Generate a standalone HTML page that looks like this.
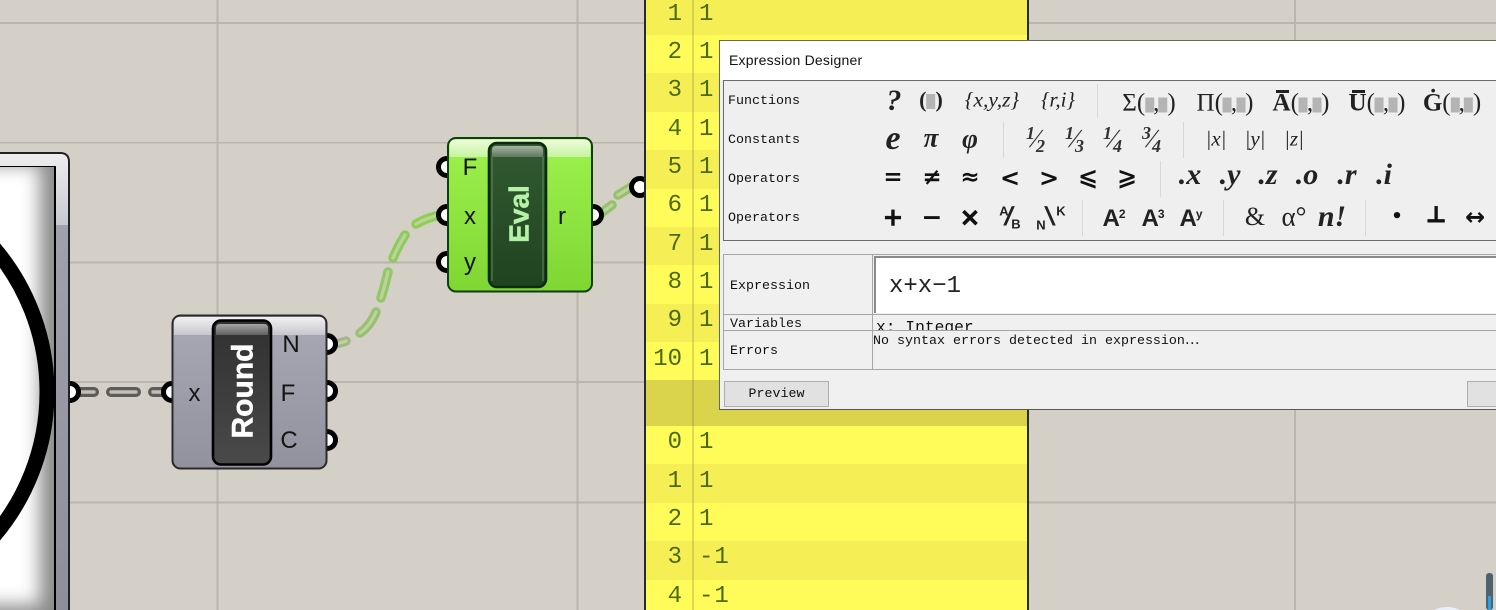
<!DOCTYPE html>
<html>
<head>
<meta charset="utf-8">
<style>
html,body{margin:0;padding:0;width:1496px;height:610px;overflow:hidden;background:#d4d0c8}
#stage{position:relative;width:1496px;height:610px;overflow:hidden}
svg.c{position:absolute;left:0;top:0}
.row{position:absolute;left:646px;width:381px}
.n,.v{position:absolute;font-family:"Liberation Mono",monospace;font-size:24px;line-height:24px;color:#4c6a12;white-space:pre}
.n{width:37px;left:645px;text-align:right}
.v{left:699px}
#dlg{position:absolute;left:719px;top:40px;width:780px;height:370px;box-sizing:border-box;background:#f0f0f0;border-top:1px solid #6a6a55;border-left:1px solid #666;border-bottom:1px solid #5a5a50}
#title{position:absolute;left:0;top:0;right:0;height:39px;background:#fff;font:14px/38px "Liberation Sans",sans-serif;color:#111;padding-left:9px;letter-spacing:.22px}
.m{position:absolute;font:13.33px/14px "Liberation Mono",monospace;color:#111;white-space:pre}
.i{position:absolute;transform:translate(-50%,-50%);white-space:nowrap;line-height:1;color:#222}
.s{font-family:"Liberation Serif",serif}
.b{font-weight:bold}
.it{font-style:italic}
.r{font-weight:normal}
.d{font-family:"DejaVu Sans",sans-serif;font-weight:bold;color:#111}
.a{font-family:"Liberation Sans",sans-serif;font-weight:bold;color:#222}
.sep{position:absolute;width:1px;background:#d8d8d8}
.h{display:inline-block;width:9px;height:15px;background:#b4b4b4;vertical-align:-2px}
.cm{margin:0 -1px}
.l{position:absolute;background:#a6a6a6}
sup.z{font-size:.5em;vertical-align:.7em;line-height:0;margin-left:-1px}
.bar{position:absolute;height:2.5px;background:#222}
.f{position:absolute;font:italic bold 18px/1 "Liberation Serif",serif;color:#333}
.fs{position:absolute;font:italic 26px/1 "Liberation Serif",serif;color:#333;transform:skewX(-14deg)}
</style>
</head>
<body>
<div id="stage">
<svg class="c" width="1496" height="610" xmlns="http://www.w3.org/2000/svg">
<defs>
<linearGradient id="gb" x1="0" y1="0" x2="0" y2="1"><stop offset="0" stop-color="#f2f2f4"/><stop offset="1" stop-color="#c6c6ce"/></linearGradient>
<linearGradient id="gg" x1="0" y1="0" x2="0" y2="1"><stop offset="0" stop-color="#a9a9b5"/><stop offset="1" stop-color="#92929e"/></linearGradient>
<linearGradient id="eb" x1="0" y1="0" x2="0" y2="1"><stop offset="0" stop-color="#eefcdc"/><stop offset="1" stop-color="#c6f4a0"/></linearGradient>
<linearGradient id="eg" x1="0" y1="0" x2="0" y2="1"><stop offset="0" stop-color="#9ef24e"/><stop offset="1" stop-color="#7fd632"/></linearGradient>
<linearGradient id="rc" x1="0" y1="0" x2="0" y2="1"><stop offset="0" stop-color="#303030"/><stop offset="1" stop-color="#4a4a4a"/></linearGradient>
<linearGradient id="rb" x1="0" y1="0" x2="0" y2="1"><stop offset="0" stop-color="#a5a5a5"/><stop offset="1" stop-color="#606060"/></linearGradient>
<linearGradient id="ec" x1="0" y1="0" x2="0" y2="1"><stop offset="0" stop-color="#335a33"/><stop offset="1" stop-color="#1f431f"/></linearGradient>
<linearGradient id="ecb" x1="0" y1="0" x2="0" y2="1"><stop offset="0" stop-color="#a6b4a4"/><stop offset="1" stop-color="#5f775d"/></linearGradient>
<linearGradient id="lb" x1="0" y1="0" x2="0" y2="1"><stop offset="0" stop-color="#eeeef0"/><stop offset="1" stop-color="#c8c8d0"/></linearGradient>
<linearGradient id="lg" x1="0" y1="0" x2="0" y2="1"><stop offset="0" stop-color="#a4a4b0"/><stop offset="1" stop-color="#8e8e9a"/></linearGradient>
<filter id="bl" x="-30%" y="-30%" width="160%" height="160%"><feGaussianBlur stdDeviation="9"/></filter>
<clipPath id="imgc"><rect x="0" y="167" width="54" height="443"/></clipPath>
</defs>
<!-- grid -->
<g fill="#bab6ae">
<rect x="0" y="22" width="1496" height="2"/>
<rect x="0" y="142" width="1496" height="1.5"/>
<rect x="0" y="261.5" width="1496" height="2"/>
<rect x="0" y="381" width="1496" height="2"/>
<rect x="0" y="501.5" width="1496" height="2"/>
<rect x="216.5" y="0" width="2" height="610"/>
<rect x="576.5" y="0" width="2" height="610"/>
<rect x="1294" y="0" width="2" height="610"/>
</g>
<!-- gray wires -->
<g fill="none" stroke-linecap="round">
<path stroke="#5c5c58" stroke-width="10" d="M76 392H94M111 392H136M153 392H170"/>
<path stroke="#c2bfb6" stroke-width="3.4" d="M76 392H94M111 392H136M153 392H170"/>
<!-- green wires -->
<g stroke-width="9.5">
<path stroke="#a3b58a" d="M334 344Q341 343 346 341"/>
<path stroke="#98bf72" d="M360 333Q370 326 376 312"/>
<path stroke="#93c765" d="M381 298Q385 285 388 272"/>
<path stroke="#8fcb5c" d="M393 258Q398 246 405 235"/>
<path stroke="#8dd050" d="M416 224Q426 218 440 215"/>
<path stroke="#97c06c" d="M600 214L612 205M618 195L636 184"/>
</g>
<g stroke-width="3.2" stroke="#bcd39e">
<path d="M334 344Q341 343 346 341"/>
<path d="M360 333Q370 326 376 312"/>
<path d="M381 298Q385 285 388 272"/>
<path d="M393 258Q398 246 405 235"/>
<path d="M416 224Q426 218 440 215"/>
<path d="M600 214L612 205M618 195L636 184"/>
</g>
</g>
<!-- ports -->
<g fill="#fff" stroke="#000" stroke-width="5">
<circle cx="70" cy="392" r="8.5"/>
<circle cx="172" cy="392" r="8.500"/>
<circle cx="327" cy="344" r="8.5"/>
<circle cx="327" cy="391" r="8.5"/>
<circle cx="327" cy="440" r="8.5"/>
<circle cx="447" cy="167" r="8.5"/>
<circle cx="447" cy="215" r="8.5"/>
<circle cx="447" cy="262" r="8.5"/>
<circle cx="593" cy="215" r="8.5"/>
<circle cx="640" cy="187" r="8.5"/>
</g>
<!-- left component -->
<path d="M-10 153H60Q69 153 69 162V620H-10Z" fill="url(#lg)" stroke="#222" stroke-width="2"/>
<path d="M-10 154H60Q68 154 68 162V225H-10Z" fill="url(#lb)"/>
<rect x="-10" y="166" width="66" height="450" fill="#000"/>
<g clip-path="url(#imgc)">
<rect x="0" y="167" width="54" height="443" fill="#8a8a8a"/>
<rect x="-60" y="165" width="100" height="440" fill="#fff" filter="url(#bl)"/>
<circle cx="-175" cy="392" r="222" fill="none" stroke="#000" stroke-width="15"/>
</g>
<!-- Round -->
<rect x="172.5" y="315.5" width="154" height="153" rx="8" fill="url(#gg)" stroke="#2a2a2a" stroke-width="2"/>
<path d="M174 335V323Q174 317 180 317H319Q325 317 325 323V335Z" fill="url(#gb)"/>
<rect x="213" y="320.5" width="58" height="144" rx="8" fill="url(#rc)" stroke="#000" stroke-width="2.6"/>
<path d="M216 335V328Q216 324 220 324H264Q268 324 268 328V335Z" fill="url(#rb)"/>
<text transform="translate(252.500 391) rotate(-90)" text-anchor="middle" font-family="Liberation Sans" font-weight="bold" font-size="30" fill="#fff" stroke="#fff" stroke-width=".5">Round</text>
<g font-family="Liberation Sans" font-size="24" fill="#141414" text-anchor="middle">
<text x="194.500" y="401">x</text>
<text x="291" y="352">N</text>
<text x="288" y="401">F</text>
<text x="289" y="448">C</text>
</g>
<!-- Eval -->
<rect x="448" y="138" width="144" height="153.500" rx="8" fill="url(#eg)" stroke="#0b3f0b" stroke-width="2"/>
<path d="M449.500 157V146Q449.500 139.500 456 139.500H584Q590.500 139.500 590.500 146V157Z" fill="url(#eb)"/>
<rect x="489" y="143" width="57" height="144" rx="8" fill="url(#ec)" stroke="#0a2c0a" stroke-width="2.6"/>
<path d="M492 157V150Q492 146 496 146H539Q543 146 543 150V157Z" fill="url(#ecb)"/>
<rect x="491.500" y="157" width="1" height="124" fill="#5f8a5f"/>
<rect x="542.500" y="157" width="1" height="124" fill="#5f8a5f"/>
<text transform="translate(528.500 214) rotate(-90)" text-anchor="middle" font-family="Liberation Sans" font-weight="bold" font-size="28" fill="#b6f2a6" stroke="#b6f2a6" stroke-width=".5">Eval</text>
<g font-family="Liberation Sans" font-size="24" fill="#141414" text-anchor="middle">
<text x="470" y="175">F</text>
<text x="470" y="224">x</text>
<text x="470" y="270">y</text>
<text x="562" y="224">r</text>
</g>
<!-- scroller -->
<rect x="1486" y="573" width="7" height="37" rx="3" fill="#50606c"/>
<rect x="1488" y="596" width="3" height="14" fill="#2aa0e0"/>
<ellipse cx="1447" cy="616" rx="17" ry="9" fill="#eaeef8"/>
</svg>

<!-- panel -->
<div style="position:absolute;left:644px;top:-2px;width:385px;height:614px;box-sizing:border-box;border-left:2px solid #2a2a28;border-right:2px solid #2a2a28;background:#fffb58"></div>
<div class="row" style="top:0;height:35px;background:#f5ef55"></div>
<div class="row" style="top:73.400px;height:38.400px;background:#f5ef55"></div>
<div class="row" style="top:150.200px;height:38.400px;background:#f5ef55"></div>
<div class="row" style="top:227px;height:38.400px;background:#f5ef55"></div>
<div class="row" style="top:303.800px;height:38.400px;background:#f5ef55"></div>
<div class="row" style="top:380px;height:46px;background:#d9d44c"></div>
<div class="row" style="top:464px;height:38.500px;background:#f5ef55"></div>
<div class="row" style="top:541px;height:38.500px;background:#f5ef55"></div>
<div style="position:absolute;left:691.500px;top:0;width:2px;height:610px;background:rgba(90,90,30,.2)"></div>

<div class="n" style="top:3px">1</div><div class="v" style="top:3px">1</div>
<div class="n" style="top:41px">2</div><div class="v" style="top:41px">1</div>
<div class="n" style="top:79px">3</div><div class="v" style="top:79px">1</div>
<div class="n" style="top:118px">4</div><div class="v" style="top:118px">1</div>
<div class="n" style="top:156px">5</div><div class="v" style="top:156px">1</div>
<div class="n" style="top:194px">6</div><div class="v" style="top:194px">1</div>
<div class="n" style="top:233px">7</div><div class="v" style="top:233px">1</div>
<div class="n" style="top:271px">8</div><div class="v" style="top:271px">1</div>
<div class="n" style="top:309px">9</div><div class="v" style="top:309px">1</div>
<div class="n" style="top:348px">10</div><div class="v" style="top:348px">1</div>
<div class="n" style="top:431px">0</div><div class="v" style="top:431px">1</div>
<div class="n" style="top:470px">1</div><div class="v" style="top:470px">1</div>
<div class="n" style="top:508px">2</div><div class="v" style="top:508px">1</div>
<div class="n" style="top:546px">3</div><div class="v" style="top:546px;letter-spacing:1px">-1</div>
<div class="n" style="top:585px">4</div><div class="v" style="top:585px;letter-spacing:1px">-1</div>

<!-- dialog -->
<div id="dlg">
<div id="title">Expression Designer</div>
</div>

<!-- dialog contents use page coordinates -->
<div style="position:absolute;left:723px;top:80px;width:790px;height:161px;box-sizing:border-box;border:1px solid #6a6a6a;background:#efefef"></div>
<div class="m" style="left:728px;top:95px">Functions</div>
<div class="m" style="left:728px;top:134px">Constants</div>
<div class="m" style="left:728px;top:173px">Operators</div>
<div class="m" style="left:728px;top:212px">Operators</div>

<div class="sep" style="left:1097px;top:84px;height:34px"></div>
<div class="sep" style="left:1003px;top:122px;height:36px"></div>
<div class="sep" style="left:1183px;top:122px;height:36px"></div>
<div class="sep" style="left:1160px;top:161px;height:36px"></div>
<div class="sep" style="left:1082px;top:200px;height:36px"></div>
<div class="sep" style="left:1223px;top:200px;height:36px"></div>
<div class="sep" style="left:1365px;top:200px;height:36px"></div>

<!-- row 1 -->
<span class="i s b it" style="left:894px;top:101px;font-size:30px">?</span>
<span class="i s b" style="left:931px;top:100px;font-size:22px">(<span class="h" style="width:9px"></span>)</span>
<span class="i s it" style="left:992px;top:100px;font-size:21.500px">{x,y,z}</span>
<span class="i s it" style="left:1058px;top:100px;font-size:21px">{r,i}</span>
<span class="i s" style="left:1149px;top:103px;font-size:25px">Σ(<span class="h"></span><span class="cm">,</span><span class="h"></span>)</span>
<span class="i s" style="left:1225px;top:103px;font-size:25px">Π(<span class="h"></span><span class="cm">,</span><span class="h"></span>)</span>
<span class="i s" style="left:1301px;top:103px;font-size:25px"><b>A</b>(<span class="h"></span><span class="cm">,</span><span class="h"></span>)</span>
<div class="bar" style="left:1276px;top:90px;width:13px"></div>
<span class="i s" style="left:1377px;top:103px;font-size:25px"><b>U</b>(<span class="h"></span><span class="cm">,</span><span class="h"></span>)</span>
<div class="bar" style="left:1352px;top:90px;width:13px"></div>
<span class="i s" style="left:1452px;top:103px;font-size:25px"><b>Ġ</b>(<span class="h"></span><span class="cm">,</span><span class="h"></span>)</span>

<!-- row 2 -->
<span class="i s b it" style="left:893px;top:139px;font-size:34px">e</span>
<span class="i s b it" style="left:931px;top:138px;font-size:27px">π</span>
<span class="i s b it" style="left:970px;top:139px;font-size:27px">φ</span>

<span class="fs" style="left:1032px;top:126px">/</span><span class="f" style="left:1026px;top:124px">1</span><span class="f" style="left:1036px;top:137px">2</span>
<span class="fs" style="left:1071px;top:126px">/</span><span class="f" style="left:1065px;top:124px">1</span><span class="f" style="left:1075px;top:137px">3</span>
<span class="fs" style="left:1109px;top:126px">/</span><span class="f" style="left:1103px;top:124px">1</span><span class="f" style="left:1113px;top:137px">4</span>
<span class="fs" style="left:1148px;top:126px">/</span><span class="f" style="left:1142px;top:124px">3</span><span class="f" style="left:1152px;top:137px">4</span>

<span class="i s it" style="left:1216px;top:139px;font-size:21px">|x|</span>
<span class="i s it" style="left:1255px;top:139px;font-size:21px">|y|</span>
<span class="i s it" style="left:1294px;top:139px;font-size:21px">|z|</span>

<!-- row 3 -->
<span class="i d" style="left:893px;top:178px;font-size:23px">=</span>
<span class="i d" style="left:932px;top:178px;font-size:23px">≠</span>
<span class="i d" style="left:970px;top:178px;font-size:23px">≈</span>
<span class="i d" style="left:1010px;top:178px;font-size:24px">&lt;</span>
<span class="i d" style="left:1049px;top:178px;font-size:24px">&gt;</span>
<span class="i d" style="left:1088px;top:177px;font-size:24px">⩽</span>
<span class="i d" style="left:1127px;top:177px;font-size:24px">⩾</span>
<span class="i s b it" style="left:1190px;top:175px;font-size:30px">.x</span>
<span class="i s b it" style="left:1230px;top:175px;font-size:30px">.y</span>
<span class="i s b it" style="left:1268px;top:175px;font-size:30px">.z</span>
<span class="i s b it" style="left:1307px;top:175px;font-size:30px">.o</span>
<span class="i s b it" style="left:1347px;top:175px;font-size:30px">.r</span>
<span class="i s b it" style="left:1384px;top:175px;font-size:30px">.i</span>

<!-- row 4 -->
<span class="i d" style="left:893px;top:217px;font-size:25px;-webkit-text-stroke:.5px #111">+</span>
<span class="i d" style="left:932px;top:217px;font-size:25px">−</span>
<span class="i d" style="left:970px;top:217px;font-size:25px;-webkit-text-stroke:.7px #111">×</span>
<span class="i a" style="left:1004px;top:211px;font-size:13px">A</span>
<span class="i a" style="left:1009px;top:216px;font-size:26px;transform:translate(-50%,-50%) skewX(-14deg)">/</span>
<span class="i a" style="left:1016px;top:224px;font-size:13px">B</span>
<span class="i a" style="left:1041px;top:225px;font-size:13px">N</span>
<span class="i a" style="left:1050px;top:216px;font-size:26px;transform:translate(-50%,-50%) skewX(14deg)">\</span>
<span class="i a" style="left:1061px;top:211px;font-size:13px">K</span>
<span class="i a" style="left:1114px;top:219px;font-size:24px">A<sup class="z">2</sup></span>
<span class="i a" style="left:1153px;top:219px;font-size:24px">A<sup class="z">3</sup></span>
<span class="i a" style="left:1191px;top:219px;font-size:24px">A<sup class="z">y</sup></span>
<span class="i s" style="left:1255px;top:217px;font-size:26px">&amp;</span>
<span class="i s" style="left:1294px;top:217px;font-size:27px">α°</span>
<span class="i s b it" style="left:1332px;top:217px;font-size:30px">n!</span>
<span class="i d" style="left:1397px;top:217px;font-size:18px">•</span>
<span class="i d" style="left:1436px;top:216px;font-size:22px;-webkit-text-stroke:1px #111">⊥</span>
<span class="i d r" style="left:1475px;top:217px;font-size:24px">↔</span>

<!-- expression table -->
<div class="l" style="left:723px;top:254px;width:790px;height:1px"></div>
<div class="l" style="left:723px;top:314px;width:790px;height:1px"></div>
<div class="l" style="left:723px;top:330px;width:790px;height:1px"></div>
<div class="l" style="left:723px;top:369px;width:790px;height:1px"></div>
<div class="l" style="left:723px;top:254px;width:1px;height:116px"></div>
<div class="l" style="left:872px;top:254px;width:1px;height:116px"></div>
<div style="position:absolute;left:874px;top:256px;width:640px;height:57px;box-sizing:border-box;background:#fff;border-left:2px solid #8a8a8a;border-top:2px solid #8a8a8a"></div>
<div class="m" style="left:730px;top:280px">Expression</div>
<div class="m" style="left:730px;top:318px">Variables</div>
<div class="m" style="left:730px;top:345px">Errors</div>
<div style="position:absolute;left:889px;top:273px;font:24px/28px 'Liberation Mono',monospace;color:#222;white-space:pre">x+x−1</div>
<div style="position:absolute;left:876px;top:315px;height:15px;width:300px;overflow:hidden"><span style="display:block;margin-top:4px;font:16.3px/18px 'Liberation Mono',monospace;color:#111;white-space:pre">x: Integer</span></div>
<div class="m" style="left:873px;top:335px">No syntax errors detected in expression<span style="font-family:'Noto Sans CJK SC',sans-serif;line-height:0">…</span></div>
<div style="position:absolute;left:724px;top:381px;width:105px;height:26px;box-sizing:border-box;background:#e1e1e1;border:1px solid #adadad;font:13.33px/25px 'Liberation Mono',monospace;color:#111;text-align:center">Preview</div>
<div style="position:absolute;left:1467px;top:381px;width:60px;height:26px;box-sizing:border-box;background:#e1e1e1;border:1px solid #adadad"></div>
</div>
</body>
</html>
